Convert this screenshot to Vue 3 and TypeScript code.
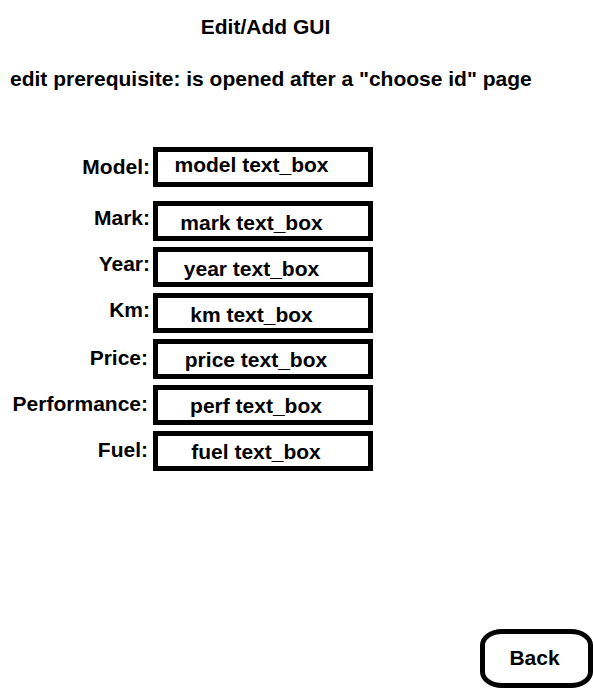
<script setup lang="ts">
import { ref } from 'vue'

interface Field {
  id: string
  label: string
  value: string
  variant?: 'lead' | 'end'
}

const fields = ref<Field[]>([
  { id: 'model', label: 'Model:', value: 'model text_box', variant: 'lead' },
  { id: 'mark', label: 'Mark:', value: 'mark text_box' },
  { id: 'year', label: 'Year:', value: 'year text_box' },
  { id: 'km', label: 'Km:', value: 'km text_box' },
  { id: 'price', label: 'Price:', value: 'price text_box', variant: 'end' },
  { id: 'performance', label: 'Performance:', value: 'perf text_box', variant: 'end' },
  { id: 'fuel', label: 'Fuel:', value: 'fuel text_box', variant: 'end' },
])
</script>

<template>
  <main class="page">
    <h1 class="title">Edit/Add GUI</h1>
    <p class="note">edit prerequisite: is opened after a "choose id" page</p>
    <form class="form" @submit.prevent>
      <div v-for="field in fields" :key="field.id" class="row" :class="field.variant">
        <label class="label" :for="field.id">{{ field.label }}</label>
        <input :id="field.id" v-model="field.value" class="box" type="text" />
      </div>
    </form>
    <button class="back" type="button">Back</button>
  </main>
</template>

<style>
body {
  margin: 0;
  background: #fff;
}
</style>

<style scoped>
.page {
  box-sizing: border-box;
  display: flex;
  flex-direction: column;
  min-height: 100vh;
  padding-top: 15px;
  color: #000;
  font: bold 21px/24px "Liberation Sans", Arial, sans-serif;
}

.title {
  margin: 0;
  padding-right: 62px;
  font: inherit;
  text-align: center;
}

.note {
  margin: 28px 0 56px;
  padding-left: 10px;
}

.form {
  display: flex;
  flex-direction: column;
  gap: 6px;
}

.row {
  display: grid;
  grid-template-columns: 150px minmax(0, 220px);
  gap: 3px;
}

.lead {
  margin-bottom: 8px;
}

.label {
  padding-top: 5px;
  text-align: right;
}

.box {
  box-sizing: border-box;
  width: 100%;
  height: 40px;
  margin: 0;
  padding: 4px 23px 0 0;
  border: 5px solid #000;
  border-radius: 0;
  background: #fff;
  color: inherit;
  font: inherit;
  text-align: center;
}

.lead .label {
  padding-top: 8px;
}

.lead .box {
  padding-top: 0;
  padding-bottom: 4px;
}

.end .label {
  padding-top: 7px;
  padding-right: 2px;
}

.end .box {
  padding-top: 2px;
  padding-right: 14px;
}

.back {
  box-sizing: border-box;
  align-self: flex-end;
  width: 113px;
  height: 59px;
  margin: auto 0 0;
  padding: 0 4px 2px 0;
  border: 5px solid #000;
  border-radius: 22px / 16px;
  background: #fff;
  color: inherit;
  font: inherit;
}
</style>
